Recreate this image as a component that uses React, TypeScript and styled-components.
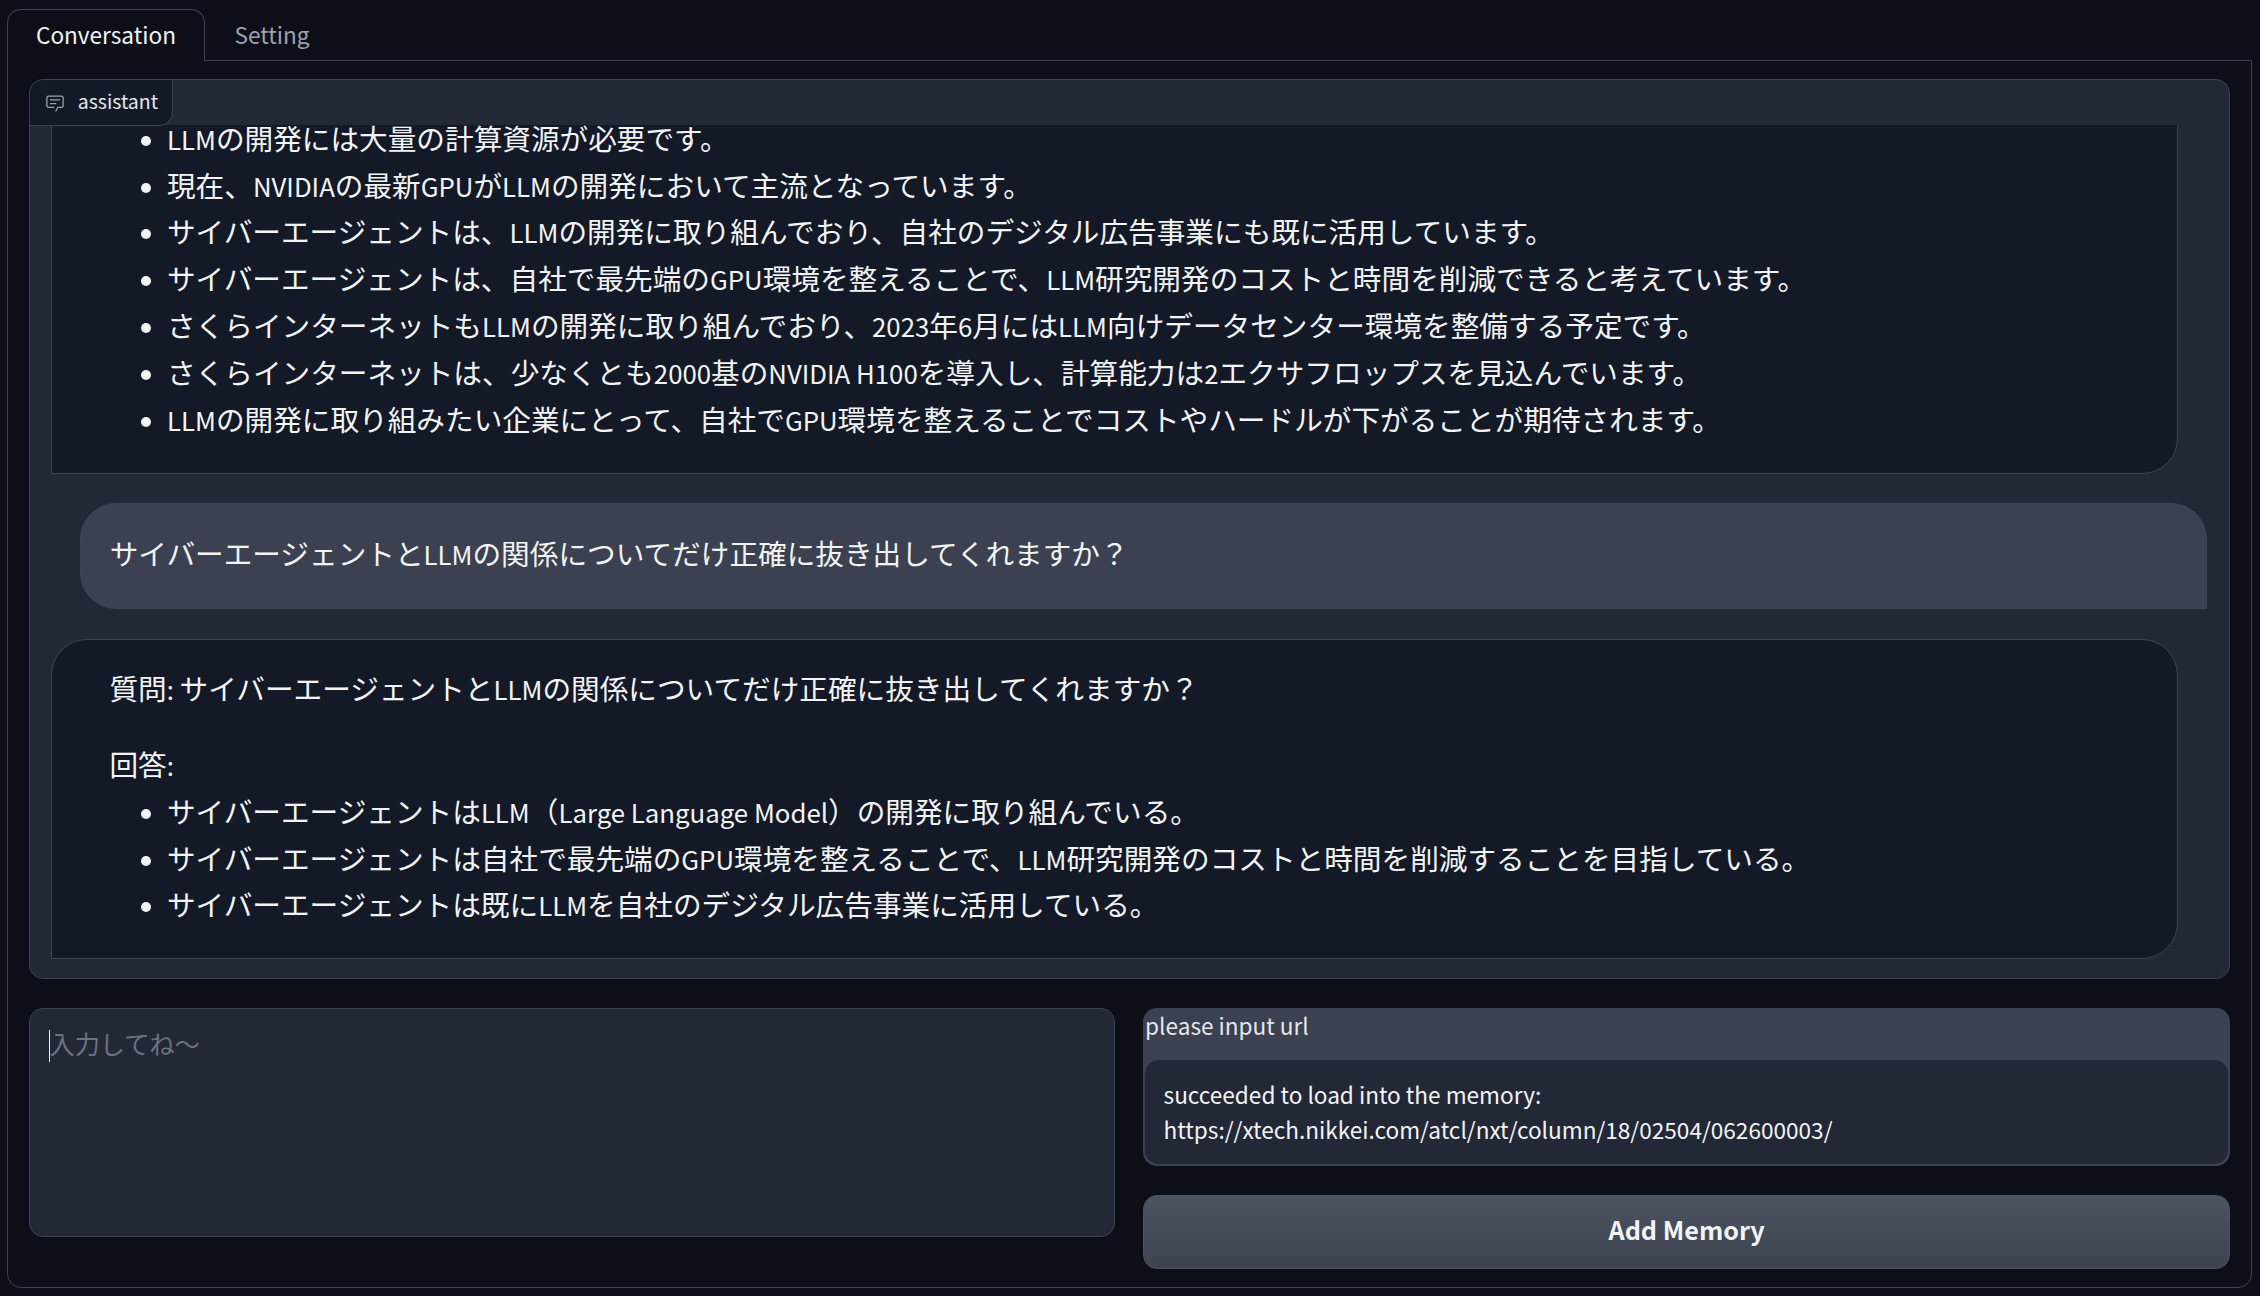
import React from "react";
import styled, { createGlobalStyle } from "styled-components";

const Global = createGlobalStyle`
  html, body { margin: 0; padding: 0; background: #0c0f17; }
  body { overflow: hidden; font-family: "Noto Sans CJK JP", "Noto Sans", sans-serif; color: #f3f4f6; }
  * { box-sizing: border-box; }
`;

const Page = styled.div`
  width: 2260px;
  height: 1296px;
  padding: 9px 8px 8px 6.7px;
  display: flex;
  flex-direction: column;
  background: #0c0f17;
`;

const TabBar = styled.div`
  display: flex;
  height: 52px;
  flex: none;
  position: relative;
  z-index: 1;
`;

const Tab = styled.div<{ $active?: boolean }>`
  height: 52px;
  padding: 0 28.3px 3px;
  display: flex;
  align-items: center;
  font-size: 22.6px;
  color: ${(p) => (p.$active ? "#f3f4f6" : "#9ca3af")};
  background: ${(p) => (p.$active ? "#0c0f17" : "transparent")};
  border: 1px solid ${(p) => (p.$active ? "#3b4150" : "transparent")};
  border-bottom: none;
  border-radius: 14px 14px 0 0;
`;

const TabPanel = styled.div`
  flex: 1;
  margin-top: -1px;
  border: 1px solid #3b4150;
  border-radius: 0 0 14px 14px;
  padding: 18px 21px 17.6px 21px;
  display: flex;
  flex-direction: column;
  gap: 29px;
  min-height: 0;
`;

const ChatPanel = styled.div`
  position: relative;
  height: 900px;
  flex: none;
  border: 1px solid #3b4150;
  border-radius: 14px;
  background: #222836;
  padding-top: 45px;
  overflow: hidden;
`;

const ChatLabel = styled.div`
  position: absolute;
  top: 0;
  left: 0;
  height: 46px;
  width: 143px;
  display: flex;
  align-items: center;
  gap: 13px;
  padding: 0 0 4px 15px;
  font-size: 19.5px;
  color: #e5e7eb;
  background: #131926;
  border-right: 1px solid #3b4150;
  border-bottom: 1px solid #3b4150;
  border-radius: 14px 0 14px 0;
  z-index: 2;
  svg { width: 20px; height: 20px; color: #9ca3af; flex: none; margin-top: 4px; }
`;

const Scroller = styled.div`
  height: 100%;
  overflow: hidden;
  display: flex;
  flex-direction: column;
  justify-content: flex-end;
  gap: 29.6px;
  padding-bottom: 18.6px;
`;

const Bubble = styled.div<{ $user?: boolean }>`
  flex: none;
  margin-left: ${(p) => (p.$user ? "50.4px" : "21.7px")};
  margin-right: ${(p) => (p.$user ? "22px" : "51.1px")};
  padding: ${(p) => (p.$user ? "25.8px 36px 31.1px 28.6px" : "25.8px 36px 30.3px 57px")};
  background: ${(p) => (p.$user ? "#3b4150" : "#131926")};
  border: 1px solid #3d4454;
  border-radius: ${(p) => (p.$user ? "36px 36px 0 36px" : "36px 36px 36px 0")};
  font-size: 28.65px;
  line-height: 46.8px;
`;

const Latin = styled.span`
  font-size: 0.9em;
  line-height: 1;
`;

const Paragraph = styled.p<{ $spaced?: boolean }>`
  margin: 0 0 ${(p) => (p.$spaced ? "28.8px" : "0")};
`;

const List = styled.ul`
  margin: 0;
  padding: 0 0 0 57.6px;
  list-style: disc;
  li::marker { font-size: 0.88em; }
`;

const FormRow = styled.div`
  display: grid;
  grid-template-columns: 1086px 1fr;
  gap: 28.6px;
  align-items: start;
`;

const InputWrap = styled.div`
  position: relative;
  height: 229px;
`;

const TextInput = styled.textarea`
  display: block;
  width: 100%;
  height: 100%;
  resize: none;
  outline: none;
  padding: 16.5px 19.8px;
  font: inherit;
  font-size: 25.2px;
  line-height: 35.3px;
  color: #f3f4f6;
  background: #222836;
  border: 1.8px solid #3b4150;
  border-radius: 14px;
  &::placeholder { color: #6b7280; opacity: 1; }
`;

const Caret = styled.span`
  position: absolute;
  left: 20px;
  top: 22px;
  width: 1.5px;
  height: 32px;
  background: #f3f4f6;
`;

const SideColumn = styled.div`
  display: flex;
  flex-direction: column;
  gap: 29px;
`;

const UrlBlock = styled.div`
  height: 158px;
  background: #3b4150;
  border-radius: 14px;
  padding: 0 1.8px 1.8px;
  display: flex;
  flex-direction: column;
`;

const UrlLabel = styled.div`
  height: 52px;
  flex: none;
  font-size: 22.6px;
  line-height: 36px;
  color: #e5e7eb;
`;

const UrlBox = styled.div`
  flex: 1;
  background: #222836;
  border-radius: 14px;
  padding: 16.6px 18.5px;
  font-size: 22.6px;
  line-height: 35.3px;
  color: #f3f4f6;
`;

const AddButton = styled.button`
  height: 74px;
  font: inherit;
  font-size: 25.2px;
  font-weight: 700;
  color: #f3f4f6;
  background: linear-gradient(to bottom, #4b5260, #3d4351);
  border: 1px solid #4b5260;
  border-radius: 14px;
  padding: 0 0 6px;
`;

const firstList = [
  "LLMの開発には大量の計算資源が必要です。",
  "現在、NVIDIAの最新GPUがLLMの開発において主流となっています。",
  "サイバーエージェントは、LLMの開発に取り組んでおり、自社のデジタル広告事業にも既に活用しています。",
  "サイバーエージェントは、自社で最先端のGPU環境を整えることで、LLM研究開発のコストと時間を削減できると考えています。",
  "さくらインターネットもLLMの開発に取り組んでおり、2023年6月にはLLM向けデータセンター環境を整備する予定です。",
  "さくらインターネットは、少なくとも2000基のNVIDIA H100を導入し、計算能力は2エクサフロップスを見込んでいます。",
  "LLMの開発に取り組みたい企業にとって、自社でGPU環境を整えることでコストやハードルが下がることが期待されます。",
];

const secondList = [
  "サイバーエージェントはLLM（Large Language Model）の開発に取り組んでいる。",
  "サイバーエージェントは自社で最先端のGPU環境を整えることで、LLM研究開発のコストと時間を削減することを目指している。",
  "サイバーエージェントは既にLLMを自社のデジタル広告事業に活用している。",
];

// Latin runs are set slightly smaller than the surrounding Japanese text.
const Mixed = ({ text }: { text: string }) => (
  <>
    {text.split(/([A-Za-z0-9:][A-Za-z0-9: ]*)/).map((part, i) =>
      i % 2 === 1 ? <Latin key={i}>{part}</Latin> : part
    )}
  </>
);

const ChatIcon = () => (
  <svg viewBox="0 0 32 32" aria-hidden="true">
    <path fill="currentColor" d="M17.74 30L16 29l4-7h6a2 2 0 0 0 2-2V8a2 2 0 0 0-2-2H6a2 2 0 0 0-2 2v12a2 2 0 0 0 2 2h9v2H6a4 4 0 0 1-4-4V8a4 4 0 0 1 4-4h20a4 4 0 0 1 4 4v12a4 4 0 0 1-4 4h-4.85z" />
    <path fill="currentColor" d="M8 10h16v2H8zm0 6h10v2H8z" />
  </svg>
);

export default function App() {
  return (
    <Page>
      <Global />
      <TabBar>
        <Tab $active>Conversation</Tab>
        <Tab>Setting</Tab>
      </TabBar>
      <TabPanel>
        <ChatPanel>
          <ChatLabel>
            <ChatIcon />
            assistant
          </ChatLabel>
          <Scroller>
            <Bubble>
              <List>
                {firstList.map((t) => (
                  <li key={t}>
                    <Mixed text={t} />
                  </li>
                ))}
              </List>
            </Bubble>
            <Bubble $user>
              <Mixed text="サイバーエージェントとLLMの関係についてだけ正確に抜き出してくれますか？" />
            </Bubble>
            <Bubble>
              <Paragraph $spaced>
                <Mixed text="質問: サイバーエージェントとLLMの関係についてだけ正確に抜き出してくれますか？" />
              </Paragraph>
              <Paragraph>
                <Mixed text="回答:" />
              </Paragraph>
              <List>
                {secondList.map((t) => (
                  <li key={t}>
                    <Mixed text={t} />
                  </li>
                ))}
              </List>
            </Bubble>
          </Scroller>
        </ChatPanel>
        <FormRow>
          <InputWrap>
            <TextInput placeholder="入力してね〜" />
            <Caret />
          </InputWrap>
          <SideColumn>
            <UrlBlock>
              <UrlLabel>please input url</UrlLabel>
              <UrlBox>
                succeeded to load into the memory:
                <br />
                https://xtech.nikkei.com/atcl/nxt/column/18/02504/062600003/
              </UrlBox>
            </UrlBlock>
            <AddButton>Add Memory</AddButton>
          </SideColumn>
        </FormRow>
      </TabPanel>
    </Page>
  );
}
